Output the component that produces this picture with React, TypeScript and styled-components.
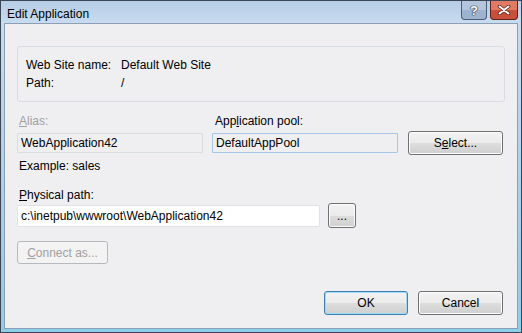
import * as React from 'react';
import styled, { createGlobalStyle, css } from 'styled-components';

const GlobalStyle = createGlobalStyle`
  html, body {
    margin: 0;
    padding: 0;
    background: #ffffff;
  }
  body {
    font-family: 'Segoe UI', 'Liberation Sans', Arial, sans-serif;
    font-size: 12px;
    color: #000000;
  }
`;

export default function App() {
  return (
    <>
      <GlobalStyle />
      <Window>
        <TitleBar>
          <TitleText>Edit Application</TitleText>
          <CaptionButtons>
            <HelpButton>
              <HelpGlyph>?</HelpGlyph>
            </HelpButton>
            <CloseButton>
              <CloseGlyph viewBox="0 0 14 10">
                <path
                  d="M2.5 1.5 L11.5 8.5 M11.5 1.5 L2.5 8.5"
                  stroke="#4a1a12"
                  strokeWidth="3.4"
                  strokeLinecap="round"
                  fill="none"
                />
                <path
                  d="M2.5 1.5 L11.5 8.5 M11.5 1.5 L2.5 8.5"
                  stroke="#ffffff"
                  strokeWidth="2"
                  strokeLinecap="round"
                  fill="none"
                />
              </CloseGlyph>
            </CloseButton>
          </CaptionButtons>
        </TitleBar>

        <Content>
          <GroupBox>
            <span>Web Site name:</span>
            <span>Default Web Site</span>
            <span>Path:</span>
            <span>/</span>
          </GroupBox>

          <FieldGrid>
            <FieldLabel disabled>
              <u>A</u>lias:
            </FieldLabel>
            <FieldLabel>
              App<u>l</u>ication pool:
            </FieldLabel>
            <span />

            <TextBox readOnly>WebApplication42</TextBox>
            <TextBox readOnly focused>
              DefaultAppPool
            </TextBox>
            <PushButton width={95} height={24} shiftUp>
              S<u>e</u>lect...
            </PushButton>
          </FieldGrid>

          <HintText>Example: sales</HintText>

          <PathLabel>
            <u>P</u>hysical path:
          </PathLabel>
          <PathRow>
            <TextBox tall>c:\inetpub\wwwroot\WebApplication42</TextBox>
            <PushButton width={28} height={25}>
              ...
            </PushButton>
          </PathRow>

          <ConnectRow>
            <PushButton width={91} height={23} disabled>
              <u>C</u>onnect as...
            </PushButton>
          </ConnectRow>

          <Footer>
            <PushButton width={84} height={24} isDefault>
              OK
            </PushButton>
            <PushButton width={85} height={24}>
              Cancel
            </PushButton>
          </Footer>
        </Content>
      </Window>
    </>
  );
}

const Window = styled.div`
  box-sizing: border-box;
  width: 522px;
  height: 333px;
  display: flex;
  flex-direction: column;
  border: 1px solid #3b4654;
  padding: 0 3px 3px 3px;
  background: linear-gradient(
    to bottom,
    #b6cde7 0px,
    #c8dbef 22px,
    #b8d3ea 120px,
    #9fcde6 260px,
    #8ccfe7 100%
  );
`;

const TitleBar = styled.div`
  height: 22px;
  flex: 0 0 22px;
  display: flex;
  align-items: flex-start;
  justify-content: space-between;
`;

const TitleText = styled.div`
  padding: 6px 0 0 3px;
  font-size: 12px;
  color: #000000;
  line-height: 14px;
`;

const CaptionButtons = styled.div`
  display: flex;
  gap: 3px;
`;

const HelpButton = styled.div`
  box-sizing: border-box;
  width: 26px;
  height: 19px;
  display: flex;
  align-items: center;
  justify-content: center;
  border: 1px solid #4a5d75;
  border-top: none;
  border-radius: 0 0 4px 4px;
  background: #9db3d0;
  box-shadow: inset 0 9px 0 0 rgba(255, 255, 255, 0.25);
`;

const CloseButton = styled.div`
  box-sizing: border-box;
  width: 28px;
  height: 19px;
  display: flex;
  align-items: center;
  justify-content: center;
  border: 1px solid #5e2118;
  border-top: none;
  border-radius: 0 0 4px 4px;
  background: #c8503a;
  box-shadow: inset 0 9px 0 0 rgba(240, 150, 130, 0.6);
`;

const CloseGlyph = styled.svg`
  width: 14px;
  height: 10px;
  display: block;
`;

const HelpGlyph = styled.span`
  font-family: 'Liberation Sans', Arial, sans-serif;
  font-weight: bold;
  font-size: 13px;
  color: #ffffff;
  text-shadow: 0 0 1px #2d3d52, 0 0 1px #2d3d52, 0 0 1px #2d3d52,
    0 0 1px #2d3d52;
  line-height: 13px;
`;

const Content = styled.div`
  flex: 1;
  display: flex;
  flex-direction: column;
  background: #efeff2;
  border: 1px solid #8c9fb5;
  padding: 22px 12px 0 12px;
`;

const GroupBox = styled.div`
  box-sizing: border-box;
  height: 56px;
  border: 1px solid #d7dde3;
  border-radius: 3px;
  padding: 9px 8px 0 8px;
  display: grid;
  grid-template-columns: 95px auto;
  grid-auto-rows: 18px;
  align-items: center;
`;

const FieldGrid = styled.div`
  margin-top: 11px;
  display: grid;
  grid-template-columns: 186px 186px 95px;
  grid-template-rows: 16px 20px;
  column-gap: 9px;
  row-gap: 4px;
  align-items: center;
`;

const FieldLabel = styled.span<{ disabled?: boolean }>`
  padding-left: ${p => (p.disabled ? '2px' : '3px')};
  color: ${p => (p.disabled ? '#a0a0a0' : '#000000')};
  line-height: 16px;
`;

const TextBox = styled.div<{
  readOnly?: boolean;
  focused?: boolean;
  tall?: boolean;
}>`
  box-sizing: border-box;
  height: ${p => (p.tall ? '22px' : '20px')};
  width: ${p => (p.tall ? '303px' : 'auto')};
  display: flex;
  align-items: center;
  padding-left: 3px;
  white-space: nowrap;
  overflow: hidden;
  background: ${p => (p.readOnly ? '#efeff2' : '#ffffff')};
  border: 1px solid
    ${p => (p.focused ? '#a5c6e6' : p.readOnly ? '#d8dde2' : '#dfe3e8')};
  border-radius: 1px;
`;

const PushButton = styled.div<{
  width: number;
  height: number;
  disabled?: boolean;
  isDefault?: boolean;
  shiftUp?: boolean;
}>`
  box-sizing: border-box;
  width: ${p => p.width}px;
  height: ${p => p.height}px;
  display: flex;
  align-items: center;
  justify-content: center;
  border-radius: 3px;
  white-space: nowrap;
  ${p => p.shiftUp && 'margin-top: -1px; margin-left: 1px;'}
  ${p =>
    p.disabled
      ? css`
          color: #a0a0a0;
          border: 1px solid #b7babd;
          background: #f3f3f4;
        `
      : css`
          color: #000000;
          border: 1px solid ${p.isDefault ? '#3c7fb1' : '#707070'};
          box-shadow: inset 0 0 0 1px ${p.isDefault ? '#9fdcf5' : '#fcfcfc'};
          background: linear-gradient(
            to bottom,
            #f2f2f2 0%,
            #ebebeb 50%,
            #dddddd 51%,
            #cfcfcf 100%
          );
        `}
`;

const HintText = styled.div`
  margin-top: 5px;
  padding-left: 2px;
  line-height: 16px;
`;

const PathLabel = styled.div`
  margin-top: 13px;
  padding-left: 2px;
  line-height: 16px;
`;

const PathRow = styled.div`
  display: flex;
  align-items: center;
  gap: 8px;
`;

const ConnectRow = styled.div`
  margin-top: 13px;
  display: flex;
`;

const Footer = styled.div`
  margin-top: auto;
  margin-bottom: 13px;
  margin-right: 2px;
  display: flex;
  justify-content: flex-end;
  gap: 10px;
`;
